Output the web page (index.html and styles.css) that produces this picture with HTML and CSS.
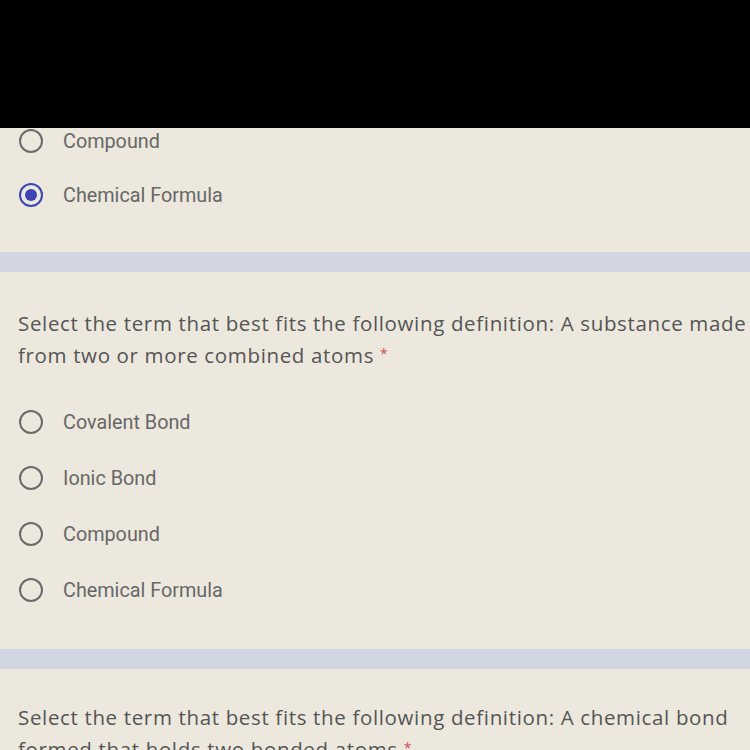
FILE: index.html
```html
<!DOCTYPE html>
<html>
<head>
<meta charset="utf-8">
<link rel="stylesheet" href="styles.css">
</head>
<body>
<div class="topbar"></div>
<div class="section first">
  <div class="options">
    <div class="option"><span class="radio"></span><span class="label">Compound</span></div>
    <div class="option"><span class="radio checked"></span><span class="label">Chemical Formula</span></div>
  </div>
</div>
<div class="band"></div>
<div class="section">
  <p class="question">Select the term that best fits the following definition: A substance made from two or more combined atoms <span class="req">*</span></p>
  <div class="options">
    <div class="option"><span class="radio"></span><span class="label">Covalent Bond</span></div>
    <div class="option"><span class="radio"></span><span class="label">Ionic Bond</span></div>
    <div class="option"><span class="radio"></span><span class="label">Compound</span></div>
    <div class="option"><span class="radio"></span><span class="label">Chemical Formula</span></div>
  </div>
</div>
<div class="band"></div>
<div class="section last">
  <p class="question">Select the term that best fits the following definition: A chemical bond formed that holds two bonded atoms <span class="req">*</span></p>
</div>
</body>
</html>
```
FILE: styles.css
```css
html, body {
  margin: 0;
  padding: 0;
  background: #ece8dd;
  height: 750px;
  overflow: hidden;
}
body {
  font-family: Roboto, "Liberation Sans", sans-serif;
}
.topbar {
  height: 128px;
  background: #000;
}
.section {
  padding: 35px 0 46px 18px;
}
.section.first {
  padding-top: 0;
  padding-bottom: 44px;
}
.section.last {
  padding-top: 32px;
}
.band {
  height: 20px;
  background: #d2d6e2;
}
.question {
  margin: 0 0 38px 0;
  font-family: "Open Sans", Roboto, sans-serif;
  font-size: 20.5px;
  letter-spacing: 0.65px;
  line-height: 32px;
  color: #555555;
  width: 732px;
}
.req {
  color: #d0505a;
  font-size: 14px;
  line-height: 1;
  vertical-align: 4px;
}
.options {
  display: flex;
  flex-direction: column;
  gap: 30px;
}
.first .options {
  gap: 28px;
}
.option {
  display: flex;
  align-items: center;
  height: 26px;
}
.radio {
  box-sizing: border-box;
  flex: none;
  width: 24px;
  height: 24px;
  border: 2.5px solid #6b6b6b;
  border-radius: 50%;
  margin-left: 1px;
  margin-right: 20px;
  display: flex;
  align-items: center;
  justify-content: center;
}
.radio.checked {
  border-color: #3b45b4;
}
.radio.checked::after {
  content: "";
  width: 12px;
  height: 12px;
  border-radius: 50%;
  background: #3b45b4;
}
.label {
  font-size: 19.8px;
  color: #676767;
}
```
